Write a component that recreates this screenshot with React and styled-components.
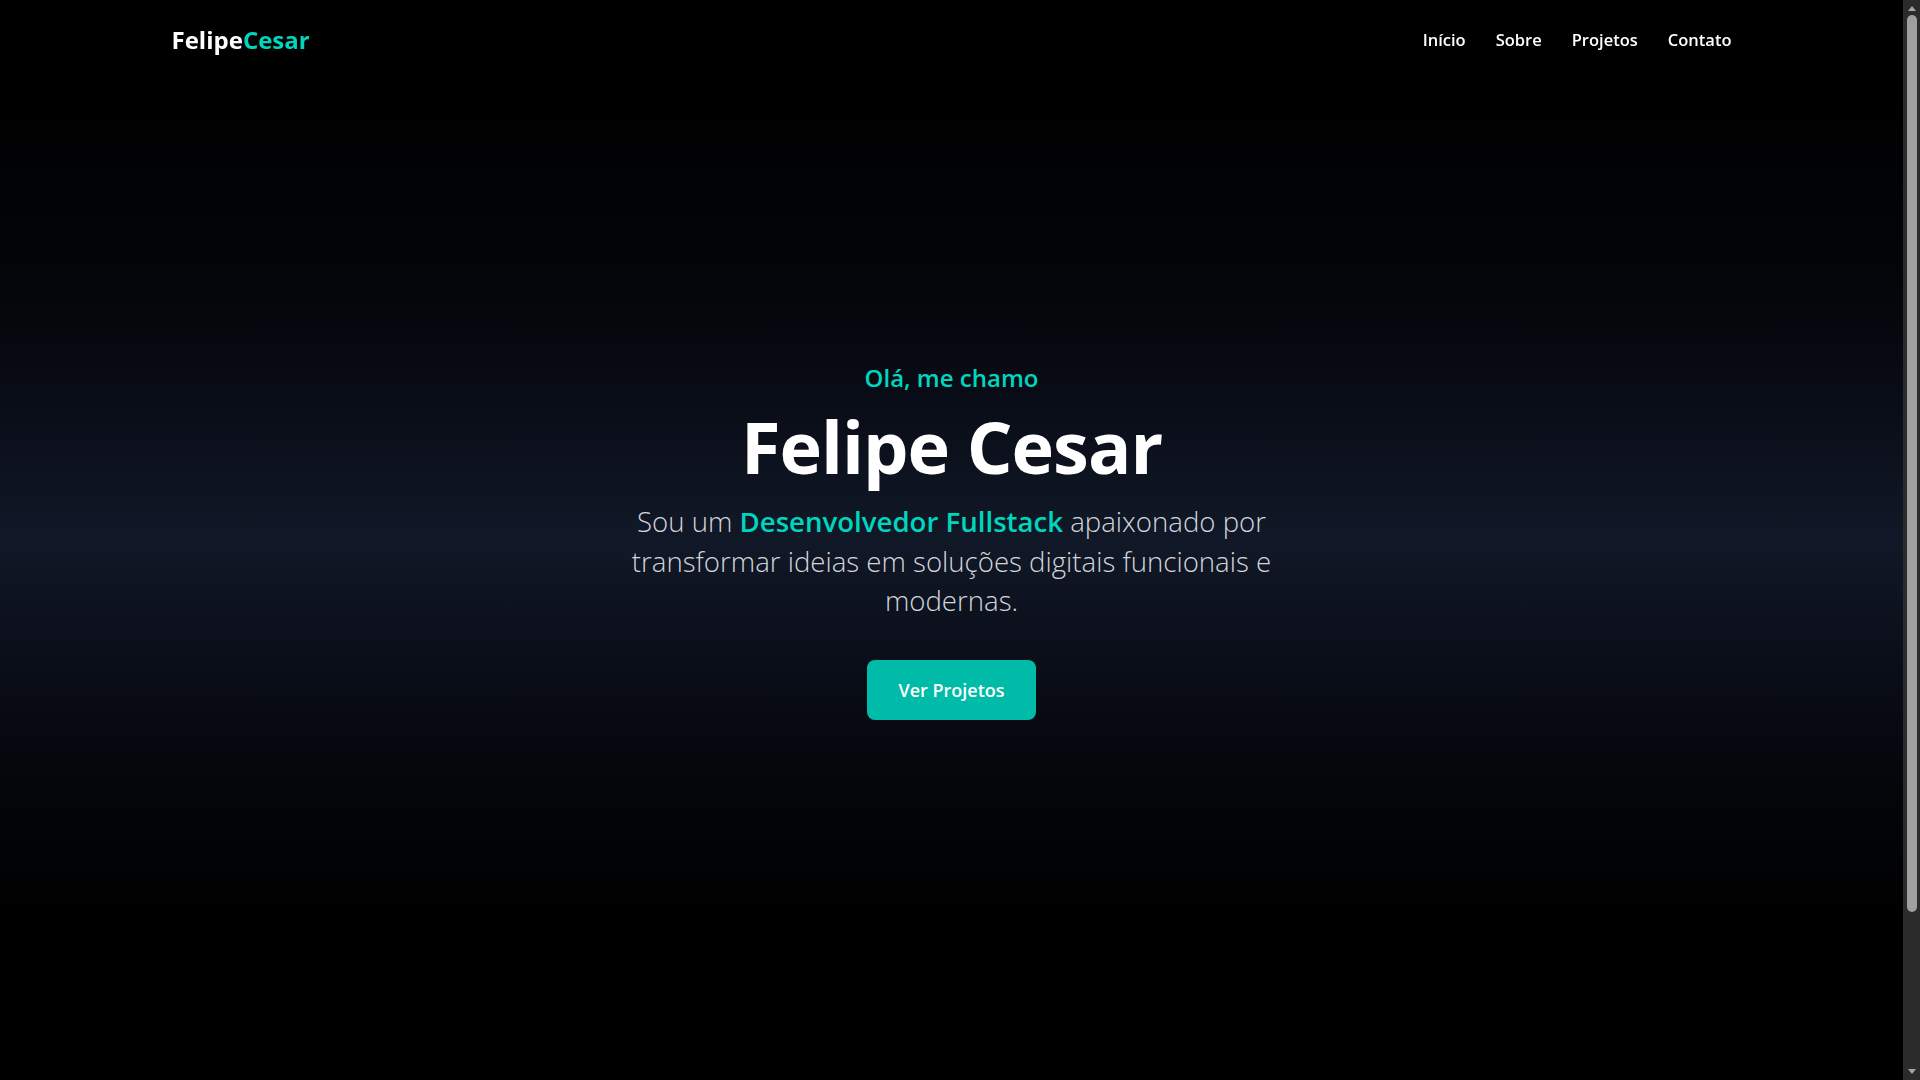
import React from "react";
import styled, { createGlobalStyle } from "styled-components";

const GlobalStyle = createGlobalStyle`
   * {
      box-sizing: border-box;
   }
   html,
   body {
      overflow: hidden;
   }
   body {
      margin: 0;
      padding-right: 17px;
      background: #000;
      color: #fff;
      font-family: "Open Sans", "Noto Sans", sans-serif;
   }
   a {
      text-decoration: none;
      color: inherit;
   }
`;

const App = () => {
   return (
      <>
         <GlobalStyle />
         <Header>
            <HeaderInner>
               <Logo href='#inicio'>
                  Felipe<span>Cesar</span>
               </Logo>
               <Nav>
                  <NavLink href='#inicio'>Início</NavLink>
                  <NavLink href='#sobre'>Sobre</NavLink>
                  <NavLink href='#projetos'>Projetos</NavLink>
                  <NavLink href='#contato'>Contato</NavLink>
               </Nav>
            </HeaderInner>
         </Header>
         <Hero id='inicio'>
            <Greeting>Olá, me chamo</Greeting>
            <Title>Felipe Cesar</Title>
            <Intro>
               Sou um <strong>Desenvolvedor Fullstack</strong> apaixonado por
               transformar ideias em soluções digitais funcionais e modernas.
            </Intro>
            <Button href='#projetos'>Ver Projetos</Button>
         </Hero>
         <Scrollbar>
            <Arrow />
            <Track>
               <Thumb />
            </Track>
            <Arrow $down />
         </Scrollbar>
      </>
   );
};

export default App;

const Header = styled.header`
   position: fixed;
   top: 0;
   left: 0;
   right: 17px;
   z-index: 10;
`;

const HeaderInner = styled.div`
   max-width: 1600px;
   margin: 0 auto;
   padding: 24px 20px;
   display: flex;
   align-items: center;
   justify-content: space-between;
`;

const Logo = styled.a`
   font-size: 24px;
   line-height: 32px;
   font-weight: 700;
   color: #fff;

   span {
      color: #00d5be;
   }
`;

const Nav = styled.nav`
   display: flex;
   align-items: center;
   gap: 30px;
`;

const NavLink = styled.a`
   font-size: 16.5px;
   line-height: 28px;
   font-weight: 600;
   color: #fff;
`;

const Hero = styled.section`
   min-height: 100vh;
   display: flex;
   flex-direction: column;
   align-items: center;
   justify-content: center;
   text-align: center;
   padding: 2px 24px 0;
   background: linear-gradient(
      to bottom,
      #000 0%,
      #000 9%,
      #04060b 28%,
      #0a0e19 39%,
      #111827 50%,
      #0a0e19 61%,
      #04060b 72%,
      #000 85%,
      #000 100%
   );
`;

const Greeting = styled.p`
   margin: 0 0 16px;
   font-size: 24px;
   line-height: 32px;
   font-weight: 600;
   color: #00d5be;
`;

const Title = styled.h1`
   margin: 0 0 20px;
   font-size: 72px;
   line-height: 1;
   font-weight: 700;
   letter-spacing: -1px;
   color: #fff;
`;

const Intro = styled.p`
   margin: 0 0 39px;
   max-width: 672px;
   font-size: 27.6px;
   line-height: 39.5px;
   font-weight: 300;
   color: #d1d5dc;

   strong {
      font-weight: 600;
      color: #00d5be;
   }
`;

const Button = styled.a`
   display: inline-block;
   padding: 16px 31px;
   border-radius: 8px;
   background: #00bba7;
   color: #fff;
   font-size: 18px;
   line-height: 28px;
   font-weight: 600;
`;

const Scrollbar = styled.div`
   position: fixed;
   top: 0;
   right: 0;
   width: 17px;
   height: 100vh;
   padding: 6px 0;
   display: flex;
   flex-direction: column;
   align-items: center;
   justify-content: space-between;
   background: #2b2b2b;
`;

const Arrow = styled.div`
   flex: none;
   width: 0;
   height: 0;
   border-left: 4.5px solid transparent;
   border-right: 4.5px solid transparent;
   border-${(p) => (p.$down ? "top" : "bottom")}: 5px solid #a3a3a3;
`;

const Track = styled.div`
   flex: 1;
   align-self: stretch;
   display: flex;
   justify-content: center;
   padding: 4px 0;
`;

const Thumb = styled.div`
   width: 10px;
   height: 897px;
   border-radius: 5px;
   background: #9f9f9f;
`;
